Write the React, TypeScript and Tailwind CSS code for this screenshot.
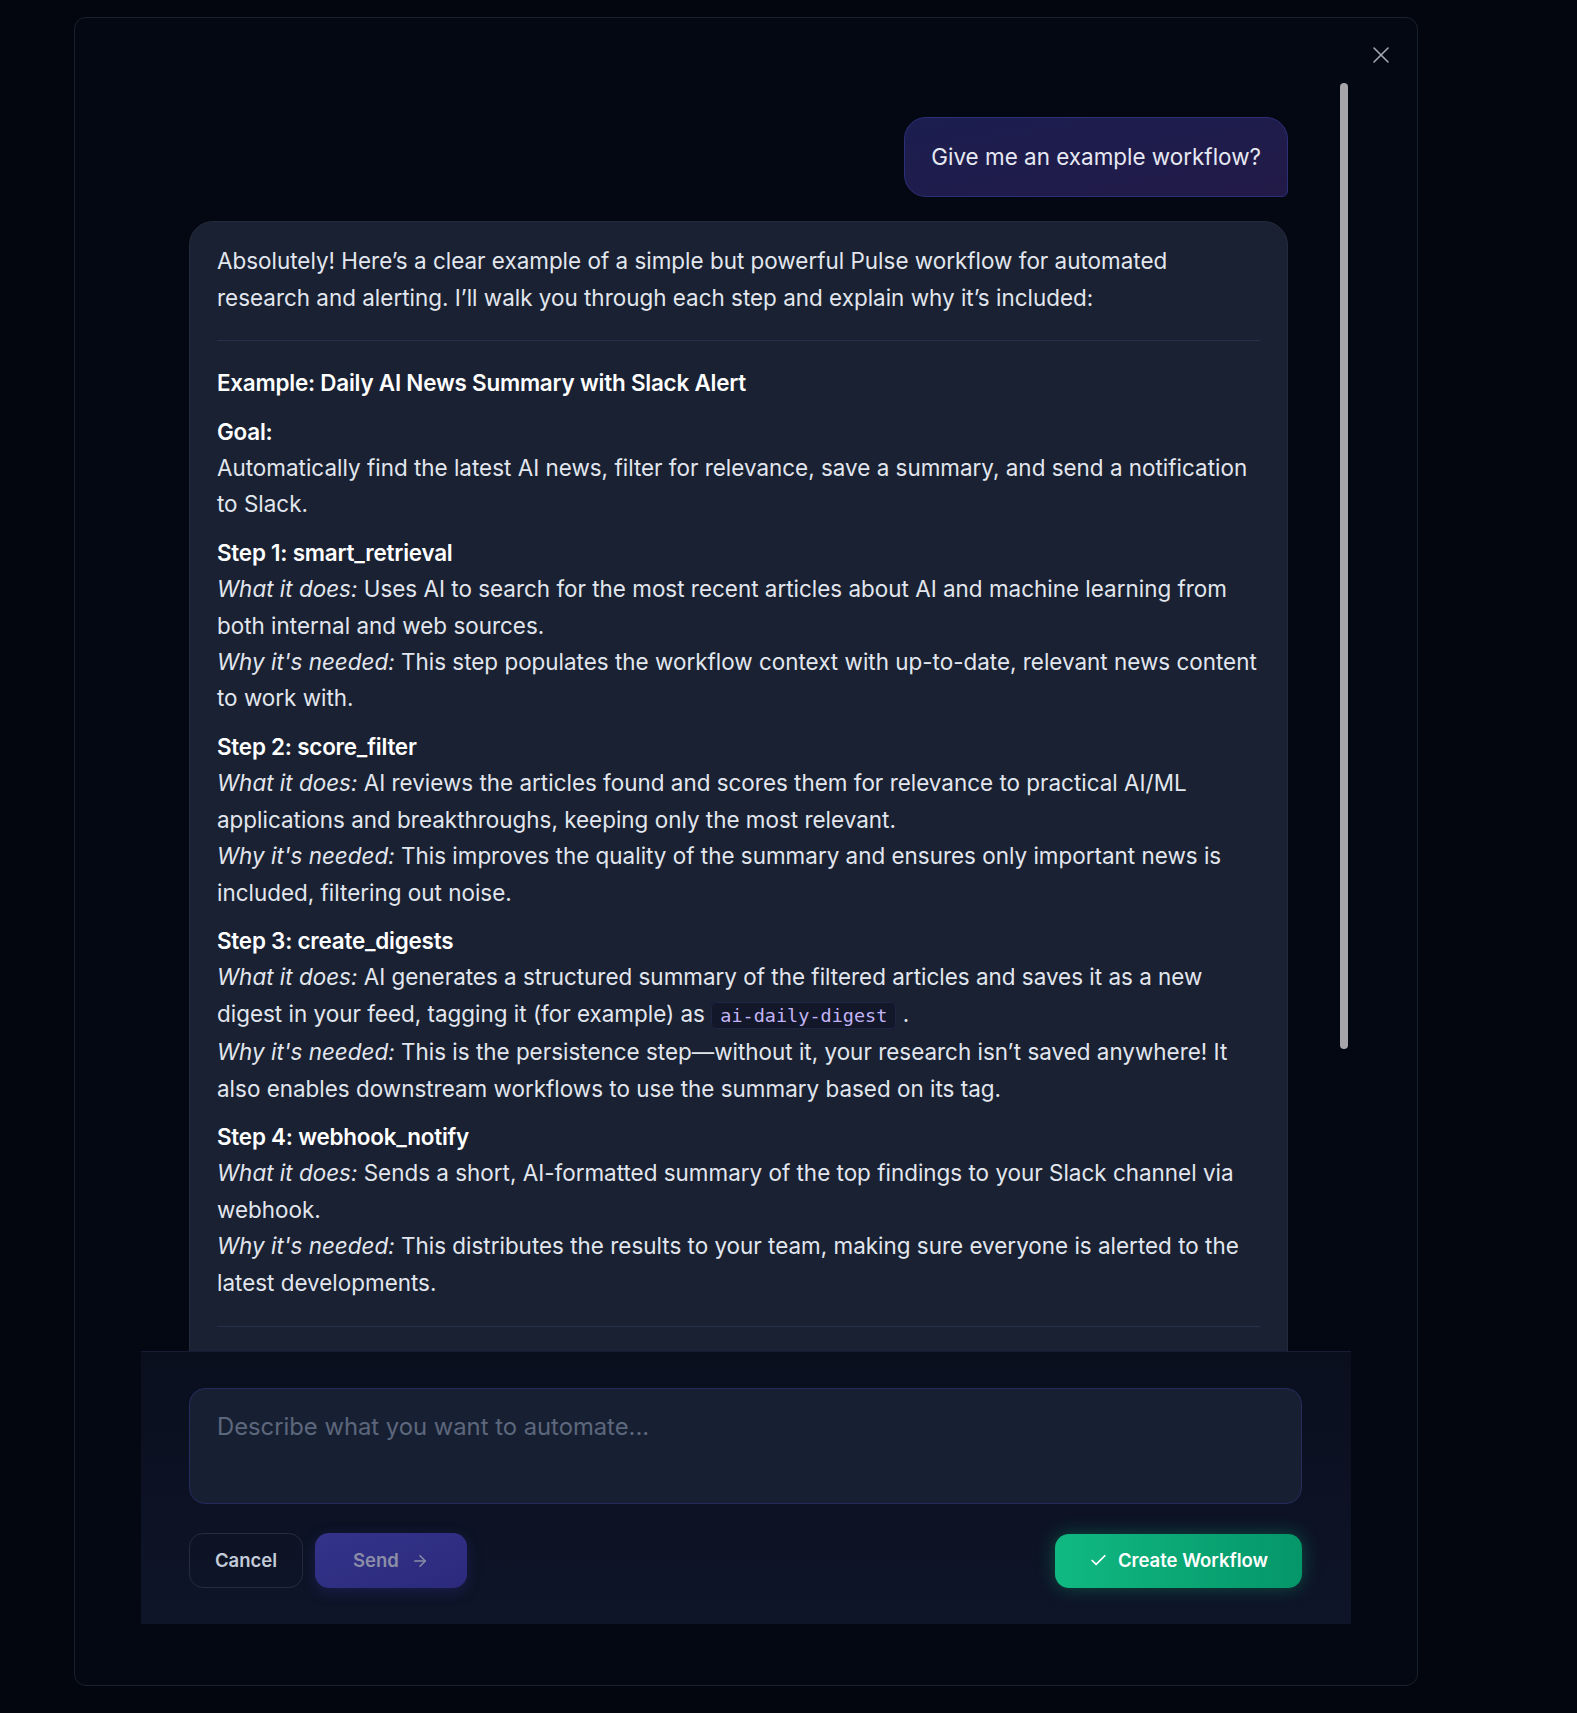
import { ArrowRight, Check, X } from 'lucide-react'

const STEPS = [
  {
    title: 'Step 1: smart_retrieval',
    does: 'Uses AI to search for the most recent articles about AI and machine learning from both internal and web sources.',
    why: 'This step populates the workflow context with up-to-date, relevant news content to work with.',
  },
  {
    title: 'Step 2: score_filter',
    does: 'AI reviews the articles found and scores them for relevance to practical AI/ML applications and breakthroughs, keeping only the most relevant.',
    why: 'This improves the quality of the summary and ensures only important news is included, filtering out noise.',
  },
  {
    title: 'Step 3: create_digests',
    does: null,
    why: 'This is the persistence step\u2014without it, your research isn\u2019t saved anywhere! It also enables downstream workflows to use the summary based on its tag.',
  },
  {
    title: 'Step 4: webhook_notify',
    does: 'Sends a short, AI-formatted summary of the top findings to your Slack channel via webhook.',
    why: 'This distributes the results to your team, making sure everyone is alerted to the latest developments.',
  },
]

export default function App() {
  return (
    <div
      className="w-full h-[1713px] bg-[#03060f] pt-[17px] pl-[74px]"
      style={{ fontFamily: 'Inter, "Noto Sans", sans-serif' }}
    >
      <div className="relative w-[1344px] h-[1669px] rounded-[12px] border border-[#1a202c] bg-[#040812] flex flex-col">
        {/* Close */}
        <button className="absolute top-[23px] right-[22px] text-[#a3a8b4]">
          <X size={28} strokeWidth={1.3} />
        </button>

        {/* Messages */}
        <div className="mt-[65px] mx-[66px] h-[1268px] flex overflow-hidden">
          <div className="flex-1 pl-[48px] pr-[52px] pt-[34px] flex flex-col gap-[24px] text-[22.45px] leading-[36.4px]">
            {/* User */}
            <div className="self-end rounded-[22px] rounded-br-[6px] border border-[#2b2f78] bg-gradient-to-br from-[#1b1e50] to-[#221a47] px-[26px] py-[21px] text-[#e6e8f2]">
              Give me an example workflow?
            </div>

            {/* Assistant */}
            <div className="rounded-[24px] border border-[#232b3c] bg-[#192132] pl-[27px] pr-[24px] pt-[21px] pb-[40px] text-[#e2e6ee]">
              <p>
                Absolutely! Here’s a clear example of a simple but powerful Pulse workflow for automated research and
                alerting. I’ll walk you through each step and explain why it’s included:
              </p>
              <div className="h-px bg-[#25304a] mt-[24px] mb-[24px] mr-[3px]" />
              <p className="font-semibold tracking-[-0.01em] text-white">
                Example: Daily AI News Summary with Slack Alert
              </p>
              <p className="mt-[12px]">
                <span className="font-semibold tracking-[-0.01em] text-white">Goal:</span>
                <br />
                Automatically find the latest AI news, filter for relevance, save a summary, and send a notification to
                Slack.
              </p>
              {STEPS.map(s => (
                <p key={s.title} className="mt-[12px]">
                  <span className="font-semibold tracking-[-0.01em] text-white">{s.title}</span>
                  <br />
                  <em>What it does:</em>{' '}
                  {s.does ?? (
                    <>
                      AI generates a structured summary of the filtered articles and saves it as a new digest in your
                      feed, tagging it (for example) as{' '}
                      <code
                        className="rounded-[5px] border border-[#1f2545] bg-[#12172a] px-[8px] py-[2px] text-[18.5px] text-[#c3b3f5]"
                        style={{ fontFamily: '"DejaVu Sans Mono", "Liberation Mono", monospace' }}
                      >
                        ai-daily-digest
                      </code>{' '}
                      .
                    </>
                  )}
                  <br />
                  <em>Why it's needed:</em> {s.why}
                </p>
              ))}
              <div className="h-px bg-[#25304a] mt-[25px] mr-[3px]" />
              <p className="mt-[24px]">
                This workflow shows how a handful of focused steps can turn raw information into timely, actionable
                updates for your team.
              </p>
            </div>
          </div>
          {/* Scrollbar */}
          <div className="w-[8px] mr-[3px] shrink-0">
            <div className="h-[966px] rounded-full bg-[#a5a5ab]" />
          </div>
        </div>

        {/* Composer */}
        <div className="mx-[66px] h-[273px] border-t border-[#151c33] bg-gradient-to-b from-[#0a0f1e] to-[#0e1528] pl-[48px] pr-[49px] pt-[36px]">
          <div className="h-[116px] rounded-[16px] border border-[#252b5c] bg-[#172033] px-[27px] pt-[20px] text-[23.8px] leading-[36px] text-[#5d677c]">
            Describe what you want to automate...
          </div>
          <div className="mt-[29px] flex items-center">
            <button className="h-[55px] w-[114px] rounded-[14px] border border-[#252c3d] text-[18.5px] font-semibold text-[#c4cbd8]">
              Cancel
            </button>
            <button className="ml-[12px] h-[55px] w-[152px] rounded-[14px] bg-gradient-to-br from-[#33338a] to-[#2b2a7d] text-[18.5px] font-semibold text-[#8b8ea6] shadow-[0_4px_14px_rgba(49,46,140,0.35)] flex items-center justify-center gap-[12px]">
              Send
              <ArrowRight size={18} strokeWidth={2} />
            </button>
            <button className="ml-auto h-[54px] w-[247px] rounded-[14px] bg-gradient-to-r from-[#10b981] to-[#059669] text-[18.5px] font-semibold text-white shadow-[0_0_18px_rgba(16,185,129,0.35)] flex items-center justify-center gap-[10px]">
              <Check size={19} strokeWidth={2.2} />
              Create Workflow
            </button>
          </div>
        </div>
      </div>
    </div>
  )
}
